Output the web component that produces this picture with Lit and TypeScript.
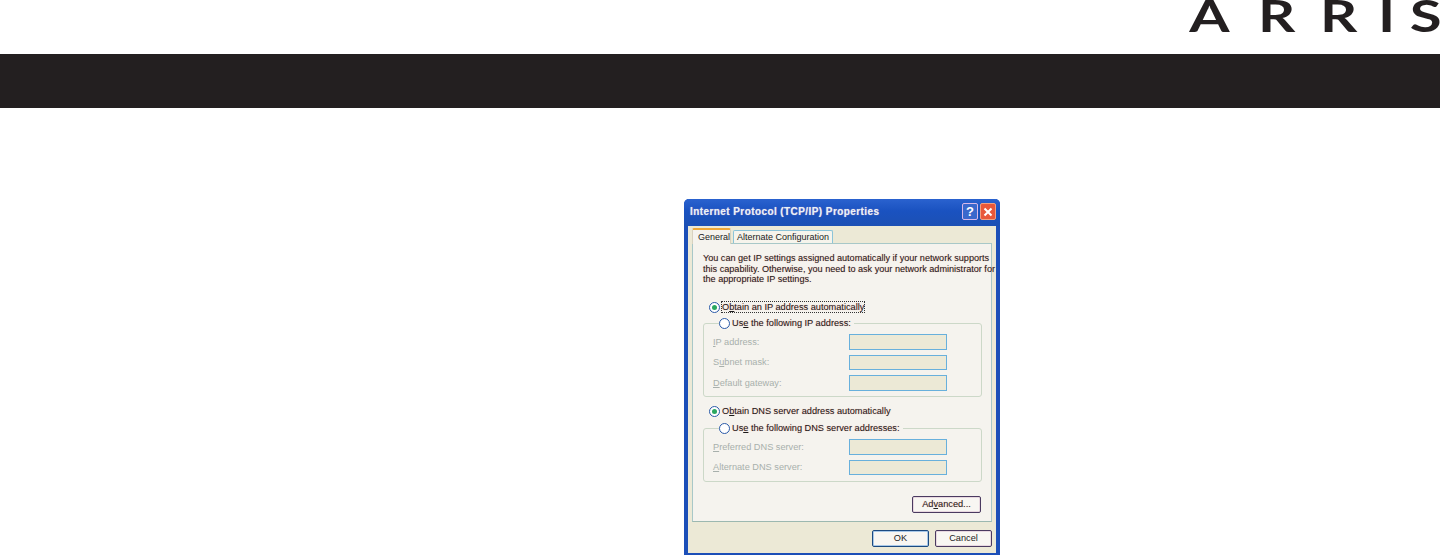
import { LitElement, html, css } from "lit";
import { customElement } from "lit/decorators.js";

@customElement("app-root")
export class AppRoot extends LitElement {
  static styles = css`
    :host { display: block; width: 1440px; height: 556px; background: #fff; overflow: hidden; font-family: "Liberation Sans", Arial, sans-serif; }
    * { box-sizing: border-box; }
    .top { height: 54px; overflow: hidden; }
    .logo { display: block; width: 1440px; height: 54px; }
    .logo text { font-family: Lato, sans-serif; font-weight: 700; font-size: 44px; fill: #231f20; }
    .bar { height: 54px; background: #231f20; }
    .main { padding: 91px 0 0 684px; }
    .dialog { width: 316px; height: 356px; background: #ece9d6; border: solid #1c4fb8; border-width: 0 4px 2px 4px; border-radius: 5px 5px 0 0; display: flex; flex-direction: column; }
    .title { height: 27px; margin: 0 -4px; padding: 0 4px 2px 6px; background: linear-gradient(180deg, #2a62cf 0%, #1a52c0 45%, #1c50b4 100%); border-radius: 5px 5px 0 0; display: flex; align-items: center; justify-content: space-between; color: #e8f2f8; font-weight: 700; font-size: 10px; letter-spacing: .42px; text-shadow: 0 0 1px #c9a0c8; }
    .btns { display: flex; gap: 2px; margin-right: 0; }
    .tb { width: 16px; height: 17px; border-radius: 2px; border: 1px solid #d8b8e8; display: flex; align-items: center; justify-content: center; font-size: 13px; font-weight: 700; color: #fff; background: #3a68cc; letter-spacing: 0; text-shadow: none; }
    .tb.x { background: #e8583a; border-color: #f0a080; }
    .tb svg { display: block; }
    .body { flex: 1; padding: 2px 4px 0 4px; display: flex; flex-direction: column; }
    .tabs { display: flex; align-items: flex-end; height: 15px; font-size: 9px; color: #222; }
    .tab { height: 13px; padding: 0 3px; display: flex; align-items: center; background: #f6f4ec; border: 1px solid #8cc4d8; border-bottom: none; border-radius: 2px 2px 0 0; margin-left: 2px; }
    .tab.on { height: 16px; width: 39px; margin: 0 0 -1px 0; padding-left: 5px; border: 1px solid #d8d2c0; border-top: 2px solid #efa838; border-bottom: none; background: #f5f3ee; position: relative; }
    .panel { height: 279px; background: #f5f3ee; border: 1px solid #a8c8c8; border-bottom-color: #9cb8b0; padding: 9px 9px 0 10px; display: flex; flex-direction: column; font-size: 9.2px; color: #1a1a1a; text-shadow: 0 0 1px #e8a8a0; }
    .intro { line-height: 10.5px; height: 31px; margin: 0; white-space: nowrap; font-size: 9.1px; }
    .radio { height: 14px; display: flex; align-items: center; gap: 2px; padding-left: 6px; white-space: nowrap; }
    .first { margin-top: 16px; }
    .second { margin-top: 7px; }
    .dot { width: 11px; height: 11px; border-radius: 50%; border: 1px solid #2a5aa8; background: #fff; display: flex; align-items: center; justify-content: center; flex: none; }
    .dot i { width: 5px; height: 5px; border-radius: 50%; background: #2aa860; }
    .focus { outline: 1px dotted #333; outline-offset: 0; }
    fieldset { margin: 0; padding: 4px 0 0 9px; border: 1px solid #ccd8c8; border-radius: 3px; min-width: 0; width: 279px; }
    .g1 { height: 81px; margin-top: 2px; }
    .g2 { height: 61px; margin-top: 3px; }
    legend { padding: 0 3px 0 0; margin-left: 6px; height: 14px; }
    legend .radio { padding-left: 0; }
    .rows { display: grid; grid-template-columns: 136px 98px; grid-auto-rows: 15.5px; row-gap: 5px; align-items: center; color: #a8b0ac; text-shadow: none; }
    .field { height: 100%; background: #ece9d6; border: 1px solid #68b0dc; }
    .adv { align-self: flex-end; margin: 14px 1px 0 0; }
    .btn { width: 69px; height: 16.5px; background: #f8f6f2; border: 1px solid #4a3a60; border-radius: 2px; display: flex; align-items: center; justify-content: center; font-size: 9.2px; color: #222; box-shadow: inset 0 0 0 1px #e8d8e0; }
    .foot { display: flex; justify-content: flex-end; gap: 6px; margin-top: 8px; }
    .foot .btn { width: 57px; }
    .foot .ok { border-color: #1c4a80; box-shadow: inset 0 0 0 1px #a8c8e8; }
  </style>
  `;

  private radio(content: unknown, on = false, focus = false) {
    return html`<div class="radio"><span class="dot">${on ? html`<i></i>` : ""}</span><span class=${focus ? "focus" : ""}>${content}</span></div>`;
  }

  render() {
    return html`
      <div class="top">
        <svg class="logo" viewBox="0 0 1440 54" aria-label="ARRIS">
          <text transform="scale(1.32 1)" y="32" x="901 953 1000 1044 1068">ARRIS</text>
        </svg>
      </div>
      <div class="bar"></div>
      <div class="main">
        <div class="dialog">
          <div class="title">
            <span>Internet Protocol (TCP/IP) Properties</span>
            <div class="btns">
              <span class="tb">?</span>
              <span class="tb x"><svg width="10" height="10" viewBox="0 0 10 10"><path d="M1.5 1.5l7 7M8.5 1.5l-7 7" stroke="#fff" stroke-width="2"/></svg></span>
            </div>
          </div>
          <div class="body">
            <div class="tabs">
              <span class="tab on">General</span>
              <span class="tab">Alternate Configuration</span>
            </div>
            <div class="panel">
              <p class="intro">You can get IP settings assigned automatically if your network supports<br>this capability. Otherwise, you need to ask your network administrator for<br>the appropriate IP settings.</p>
              <div class="first">${this.radio(html`O<u>b</u>tain an IP address automatically`, true, true)}</div>
              <fieldset class="g1">
                <legend>${this.radio(html`Us<u>e</u> the following IP address:`)}</legend>
                <div class="rows">
                  <span><u>I</u>P address:</span><span class="field"></span>
                  <span>S<u>u</u>bnet mask:</span><span class="field"></span>
                  <span><u>D</u>efault gateway:</span><span class="field"></span>
                </div>
              </fieldset>
              <div class="second">${this.radio(html`O<u>b</u>tain DNS server address automatically`, true)}</div>
              <fieldset class="g2">
                <legend>${this.radio(html`Us<u>e</u> the following DNS server addresses:`)}</legend>
                <div class="rows">
                  <span><u>P</u>referred DNS server:</span><span class="field"></span>
                  <span><u>A</u>lternate DNS server:</span><span class="field"></span>
                </div>
              </fieldset>
              <div class="btn adv"><span>Ad<u>v</u>anced...</span></div>
            </div>
            <div class="foot">
              <div class="btn ok">OK</div>
              <div class="btn">Cancel</div>
            </div>
          </div>
        </div>
      </div>
    `;
  }
}
